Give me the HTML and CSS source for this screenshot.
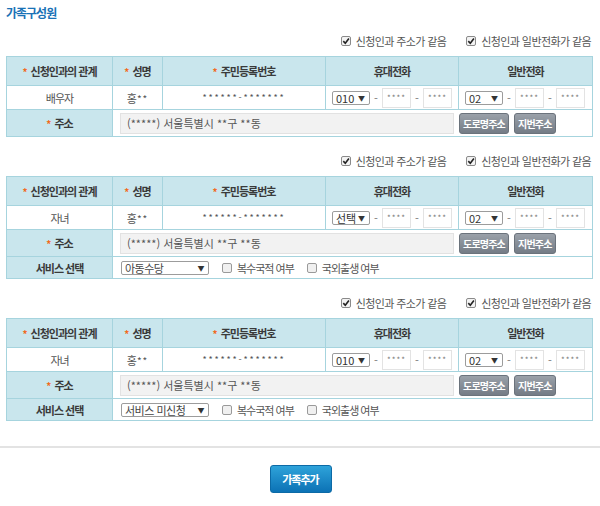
FILE: index.html
```
<!DOCTYPE html>
<html lang="ko">
<head>
    <meta charset="UTF-8">
    <title>가족구성원</title>
    <link rel="stylesheet" href="styles.css">
</head>
<body>
    <div class="wrap">
        <h2 class="title">가족구성원</h2>

        <!-- 가족 1 -->
        <div class="member">
            <div class="same-opts">
                <span class="chk"><svg class="cb" width="10" height="10"><rect x=".5" y=".5" width="9" height="9" rx="1.5" fill="#f3f3f3" stroke="#8a8a8a"/><path d="M2.3 5.1 L4.3 7.2 L7.9 2.5" stroke="#222" stroke-width="1.6" fill="none"/></svg>신청인과 주소가 같음</span>
                <span class="chk"><svg class="cb" width="10" height="10"><rect x=".5" y=".5" width="9" height="9" rx="1.5" fill="#f3f3f3" stroke="#8a8a8a"/><path d="M2.3 5.1 L4.3 7.2 L7.9 2.5" stroke="#222" stroke-width="1.6" fill="none"/></svg>신청인과 일반전화가 같음</span>
            </div>
            <table class="member-tbl">
                <colgroup>
                    <col style="width:106px"><col style="width:50px"><col style="width:163px"><col style="width:133px"><col style="width:134px">
                </colgroup>
                <tr class="head">
                    <th><span class="req">*</span>신청인과의 관계</th>
                    <th><span class="req">*</span>성명</th>
                    <th><span class="req">*</span>주민등록번호</th>
                    <th>휴대전화</th>
                    <th>일반전화</th>
                </tr>
                <tr class="data">
                    <td>배우자</td>
                    <td>홍<span class="star">**</span></td>
                    <td class="jumin">******-*******</td>
                    <td class="phone">
                        <div class="phone-set">
                            <span class="sel sel-s">010<i>▼</i></span><span class="dash">-</span><span class="inp">****</span><span class="dash">-</span><span class="inp">****</span>
                        </div>
                    </td>
                    <td class="phone">
                        <div class="phone-set">
                            <span class="sel sel-s">02<i>▼</i></span><span class="dash">-</span><span class="inp">****</span><span class="dash">-</span><span class="inp">****</span>
                        </div>
                    </td>
                </tr>
                <tr class="addr">
                    <th><span class="req">*</span>주소</th>
                    <td colspan="4" class="addr-cell">
                        <div class="addr-set">
                            <span class="addr-box">(*****) 서울특별시 **구 **동</span>
                            <button class="btn-gray">도로명주소</button>
                            <button class="btn-gray">지번주소</button>
                        </div>
                    </td>
                </tr>
            </table>
        </div>

        <!-- 가족 2 -->
        <div class="member">
            <div class="same-opts">
                <span class="chk"><svg class="cb" width="10" height="10"><rect x=".5" y=".5" width="9" height="9" rx="1.5" fill="#f3f3f3" stroke="#8a8a8a"/><path d="M2.3 5.1 L4.3 7.2 L7.9 2.5" stroke="#222" stroke-width="1.6" fill="none"/></svg>신청인과 주소가 같음</span>
                <span class="chk"><svg class="cb" width="10" height="10"><rect x=".5" y=".5" width="9" height="9" rx="1.5" fill="#f3f3f3" stroke="#8a8a8a"/><path d="M2.3 5.1 L4.3 7.2 L7.9 2.5" stroke="#222" stroke-width="1.6" fill="none"/></svg>신청인과 일반전화가 같음</span>
            </div>
            <table class="member-tbl">
                <colgroup>
                    <col style="width:106px"><col style="width:50px"><col style="width:163px"><col style="width:133px"><col style="width:134px">
                </colgroup>
                <tr class="head">
                    <th><span class="req">*</span>신청인과의 관계</th>
                    <th><span class="req">*</span>성명</th>
                    <th><span class="req">*</span>주민등록번호</th>
                    <th>휴대전화</th>
                    <th>일반전화</th>
                </tr>
                <tr class="data">
                    <td>자녀</td>
                    <td>홍<span class="star">**</span></td>
                    <td class="jumin">******-*******</td>
                    <td class="phone">
                        <div class="phone-set">
                            <span class="sel sel-s">선택<i>▼</i></span><span class="dash">-</span><span class="inp">****</span><span class="dash">-</span><span class="inp">****</span>
                        </div>
                    </td>
                    <td class="phone">
                        <div class="phone-set">
                            <span class="sel sel-s">02<i>▼</i></span><span class="dash">-</span><span class="inp">****</span><span class="dash">-</span><span class="inp">****</span>
                        </div>
                    </td>
                </tr>
                <tr class="addr">
                    <th><span class="req">*</span>주소</th>
                    <td colspan="4" class="addr-cell">
                        <div class="addr-set">
                            <span class="addr-box">(*****) 서울특별시 **구 **동</span>
                            <button class="btn-gray">도로명주소</button>
                            <button class="btn-gray">지번주소</button>
                        </div>
                    </td>
                </tr>
                <tr class="svc">
                    <th>서비스 선택</th>
                    <td colspan="4" class="svc-cell">
                        <div class="svc-set">
                            <span class="sel sel-l">아동수당<i>▼</i></span>
                            <span class="chk off"><svg class="cb" width="10" height="10"><rect x=".5" y=".5" width="9" height="9" rx="1.5" fill="#f0f0f0" stroke="#9a9a9a"/></svg>복수국적 여부</span>
                            <span class="chk off"><svg class="cb" width="10" height="10"><rect x=".5" y=".5" width="9" height="9" rx="1.5" fill="#f0f0f0" stroke="#9a9a9a"/></svg>국외출생 여부</span>
                        </div>
                    </td>
                </tr>
            </table>
        </div>

        <!-- 가족 3 -->
        <div class="member">
            <div class="same-opts">
                <span class="chk"><svg class="cb" width="10" height="10"><rect x=".5" y=".5" width="9" height="9" rx="1.5" fill="#f3f3f3" stroke="#8a8a8a"/><path d="M2.3 5.1 L4.3 7.2 L7.9 2.5" stroke="#222" stroke-width="1.6" fill="none"/></svg>신청인과 주소가 같음</span>
                <span class="chk"><svg class="cb" width="10" height="10"><rect x=".5" y=".5" width="9" height="9" rx="1.5" fill="#f3f3f3" stroke="#8a8a8a"/><path d="M2.3 5.1 L4.3 7.2 L7.9 2.5" stroke="#222" stroke-width="1.6" fill="none"/></svg>신청인과 일반전화가 같음</span>
            </div>
            <table class="member-tbl">
                <colgroup>
                    <col style="width:106px"><col style="width:50px"><col style="width:163px"><col style="width:133px"><col style="width:134px">
                </colgroup>
                <tr class="head">
                    <th><span class="req">*</span>신청인과의 관계</th>
                    <th><span class="req">*</span>성명</th>
                    <th><span class="req">*</span>주민등록번호</th>
                    <th>휴대전화</th>
                    <th>일반전화</th>
                </tr>
                <tr class="data">
                    <td>자녀</td>
                    <td>홍<span class="star">**</span></td>
                    <td class="jumin">******-*******</td>
                    <td class="phone">
                        <div class="phone-set">
                            <span class="sel sel-s">010<i>▼</i></span><span class="dash">-</span><span class="inp">****</span><span class="dash">-</span><span class="inp">****</span>
                        </div>
                    </td>
                    <td class="phone">
                        <div class="phone-set">
                            <span class="sel sel-s">02<i>▼</i></span><span class="dash">-</span><span class="inp">****</span><span class="dash">-</span><span class="inp">****</span>
                        </div>
                    </td>
                </tr>
                <tr class="addr">
                    <th><span class="req">*</span>주소</th>
                    <td colspan="4" class="addr-cell">
                        <div class="addr-set">
                            <span class="addr-box">(*****) 서울특별시 **구 **동</span>
                            <button class="btn-gray">도로명주소</button>
                            <button class="btn-gray">지번주소</button>
                        </div>
                    </td>
                </tr>
                <tr class="svc">
                    <th>서비스 선택</th>
                    <td colspan="4" class="svc-cell">
                        <div class="svc-set">
                            <span class="sel sel-l">서비스 미신청<i>▼</i></span>
                            <span class="chk off"><svg class="cb" width="10" height="10"><rect x=".5" y=".5" width="9" height="9" rx="1.5" fill="#f0f0f0" stroke="#9a9a9a"/></svg>복수국적 여부</span>
                            <span class="chk off"><svg class="cb" width="10" height="10"><rect x=".5" y=".5" width="9" height="9" rx="1.5" fill="#f0f0f0" stroke="#9a9a9a"/></svg>국외출생 여부</span>
                        </div>
                    </td>
                </tr>
            </table>
        </div>
    </div>

    <div class="btn-area">
        <button class="btn-add">가족추가</button>
    </div>
</body>
</html>
```

FILE: styles.css
```
/* 기본 */
body {
    margin: 0;
    padding: 0;
    background-color: #fff;
    color: #555;
    font-family: "Noto Sans CJK KR", "Noto Sans", sans-serif;
    font-size: 11px;
    letter-spacing: -1px;
}

.wrap {
    padding: 0 8px 0 6px;
}

.title {
    margin: 0;
    padding-top: 5px;
    height: 16px;
    line-height: 16px;
    font-size: 12px;
    font-weight: bold;
    color: #1a72b6;
    letter-spacing: -1px;
}

/* 가족 블록 */
.member {
    margin-top: 14px;
}

.member:first-of-type {
    margin-top: 10px;
}

.same-opts {
    display: flex;
    justify-content: flex-end;
    align-items: center;
    gap: 20px;
    height: 20px;
    margin-bottom: 5px;
    padding-right: 1px;
    color: #555;
    letter-spacing: -0.6px;
}

.chk {
    display: inline-flex;
    align-items: center;
    gap: 5px;
    white-space: nowrap;
}

.cb {
    display: block;
    flex: none;
}

/* 테이블 */
.member-tbl {
    width: 586px;
    border-collapse: collapse;
    table-layout: fixed;
}

.member-tbl th,
.member-tbl td {
    border: 1px solid #a6d4de;
    padding: 0;
    text-align: center;
    vertical-align: middle;
    white-space: nowrap;
}

.member-tbl th {
    background-color: #c9e6ed;
    color: #3a3a3a;
    font-weight: bold;
}

.member-tbl td {
    background-color: #fff;
    color: #555;
}

.head {
    height: 29px;
}

.data {
    height: 24px;
}

.addr {
    height: 27px;
}

.svc {
    height: 22px;
}

.req {
    color: #f26b1d;
    margin-right: 4px;
    font-size: 10px;
}

.star {
    margin-left: 1px;
    font-size: 10px;
    letter-spacing: 1px;
}

.jumin {
    letter-spacing: 1.8px;
    font-size: 9px;
}

/* 전화번호 */
.member-tbl td.phone {
    text-align: left;
    padding-left: 6px;
}

.phone-set {
    display: flex;
    align-items: center;
}

.sel {
    display: inline-flex;
    align-items: center;
    justify-content: space-between;
    box-sizing: border-box;
    height: 14px;
    padding: 0 4px 0 3px;
    border: 1px solid #9c9c9c;
    border-radius: 2px;
    background-color: #fff;
    color: #333;
    font-size: 11px;
    letter-spacing: 0;
}

.sel i {
    font-style: normal;
    font-size: 7px;
    color: #333;
}

.sel-s {
    width: 38px;
}

.sel-l {
    width: 88px;
    color: #444;
    letter-spacing: -0.5px;
}

.dash {
    width: 12px;
    text-align: center;
    color: #777;
    letter-spacing: 0;
}

.inp {
    display: inline-block;
    box-sizing: border-box;
    width: 29px;
    height: 20px;
    line-height: 18px;
    border: 1px solid #e3e3e3;
    text-align: center;
    color: #777;
    font-size: 8px;
    letter-spacing: 1px;
}

/* 주소 */
.member-tbl td.addr-cell {
    text-align: left;
    padding-left: 7px;
}

.addr-set {
    display: flex;
    align-items: center;
}

.addr-box {
    display: inline-block;
    box-sizing: border-box;
    width: 334px;
    height: 21px;
    line-height: 19px;
    padding-left: 6px;
    border: 1px solid #e2e2e2;
    background-color: #f2f2f2;
    color: #555;
    letter-spacing: 0;
}

.btn-gray {
    height: 21px;
    margin-left: 5px;
    padding: 0 3px;
    border: 1px solid #6b737c;
    border-radius: 3px;
    background: linear-gradient(#9aa1a9, #747c86);
    color: #fff;
    font-family: inherit;
    font-size: 10px;
    font-weight: bold;
    letter-spacing: -0.8px;
    cursor: pointer;
}

/* 서비스 선택 */
.member-tbl td.svc-cell {
    text-align: left;
    padding-left: 8px;
}

.svc-set {
    display: flex;
    align-items: center;
    gap: 13px;
}

/* 하단 버튼 */
.btn-area {
    margin-top: 25px;
    border-top: 2px solid #e3e3e3;
    padding-top: 17px;
    text-align: center;
}

.btn-add {
    width: 62px;
    height: 28px;
    margin-left: 1px;
    border: 1px solid #0c6aa6;
    border-radius: 3px;
    background: linear-gradient(#2ea3da, #0c72b5);
    color: #fff;
    font-family: inherit;
    font-size: 11px;
    font-weight: bold;
    letter-spacing: -1px;
    cursor: pointer;
}
```
